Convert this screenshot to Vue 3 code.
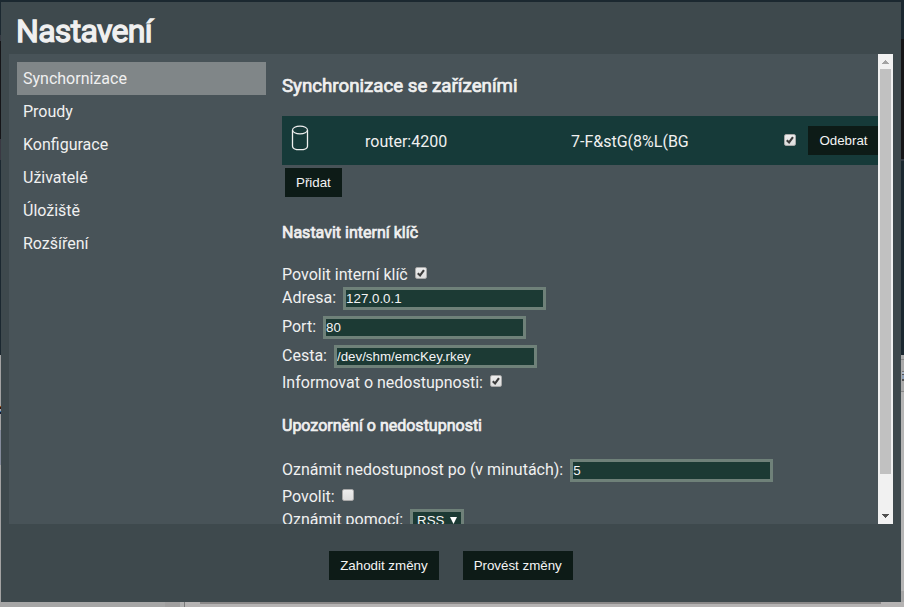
<script setup>
import { ref } from 'vue'

const sections = ['Synchornizace', 'Proudy', 'Konfigurace', 'Uživatelé', 'Úložiště', 'Rozšíření']
const active = ref('Synchornizace')
const deviceEnabled = ref(true)
const keyEnabled = ref(true)
const keyNotify = ref(true)
const alertEnabled = ref(false)
const address = ref('127.0.0.1')
const port = ref('80')
const path = ref('/dev/shm/emcKey.rkey')
const minutes = ref('5')
</script>

<template>
  <div class="backdrop">
    <div class="edge left"><i class="ink"></i></div>
    <div class="edge right"><i class="ink"></i></div>
    <div class="edge bottom"></div>
    <main class="dialog">
      <h1>Nastavení</h1>
      <div class="panel">
        <nav>
          <a v-for="s in sections" :key="s" :class="{ active: s === active }" @click="active = s">{{ s }}</a>
        </nav>
        <section class="content">
          <h2>Synchronizace se zařízeními</h2>
          <div class="device">
            <svg class="disk" width="18" height="26" viewBox="0 0 18 26" fill="none" stroke="#f0f0f0">
              <ellipse cx="9" cy="5" rx="7.5" ry="3.9" stroke-width="1.1" />
              <path d="M1.5 5v16.2c0 2.1 3.1 3.5 7.5 3.5s7.5-1.4 7.5-3.5V5" stroke-width="1.3" />
            </svg>
            <span class="host">router:4200</span>
            <span class="secret">7-F&amp;stG(8%L(BG</span>
            <label class="check"><input v-model="deviceEnabled" type="checkbox" /><svg v-if="deviceEnabled" viewBox="0 0 13 13"><path d="M3 6.8l2.5 2.4L9.7 3.4" /></svg></label>
            <button class="remove">Odebrat</button>
          </div>
          <button class="add">Přidat</button>

          <h3>Nastavit interní klíč</h3>
          <div class="row"><span>Povolit interní klíč</span><label class="check"><input v-model="keyEnabled" type="checkbox" /><svg v-if="keyEnabled" viewBox="0 0 13 13"><path d="M3 6.8l2.5 2.4L9.7 3.4" /></svg></label></div>
          <div class="row field"><span>Adresa:</span><input v-model="address" class="text" /></div>
          <div class="row field"><span>Port:</span><input v-model="port" class="text" /></div>
          <div class="row field last"><span>Cesta:</span><input v-model="path" class="text" /></div>
          <div class="row"><span>Informovat o nedostupnosti:</span><label class="check"><input v-model="keyNotify" type="checkbox" /><svg v-if="keyNotify" viewBox="0 0 13 13"><path d="M3 6.8l2.5 2.4L9.7 3.4" /></svg></label></div>

          <h3 class="second">Upozornění o nedostupnosti</h3>
          <div class="row field last"><span>Oznámit nedostupnost po (v minutách):</span><input v-model="minutes" class="text" /></div>
          <div class="row"><span>Povolit:</span><label class="check"><input v-model="alertEnabled" type="checkbox" /></label></div>
          <div class="row field"><span>Oznámit pomocí:</span><div class="select">RSS<svg width="7" height="7" viewBox="0 0 7 7"><path d="M0 0h7L3.5 7z" fill="#fff" /></svg></div></div>
        </section>
        <div class="scrollbar">
          <svg width="15" height="15" viewBox="0 0 15 15" shape-rendering="crispEdges"><path d="M4 10L7.5 6 11 10z" fill="#a3a3a3" /></svg>
          <div class="thumb"></div>
          <svg width="15" height="15" viewBox="0 0 15 15" shape-rendering="crispEdges"><path d="M4 5h7L7.5 9z" fill="#505050" /></svg>
        </div>
      </div>
      <footer>
        <button>Zahodit změny</button>
        <button>Provést změny</button>
      </footer>
    </main>
  </div>
</template>

<style>
html, body { margin: 0; overflow: hidden; }
</style>

<style scoped>
* { box-sizing: border-box; }
.backdrop {
  position: relative;
  width: 904px;
  height: 607px;
  padding: 2px 3px 5px 1px;
  overflow: hidden;
  background: #1b2830;
  font: 16px/19px Roboto, "Liberation Sans", sans-serif;
  color: #f0f0f0;
}
.edge { position: absolute; }
.left {
  left: 0; top: 0; width: 1px; height: 607px;
  background: linear-gradient(#1b2830 35px, #353942 35px 41px, #151518 41px 139px, #393842 139px 160px, #1b2830 160px 355px, #a3a3a3 355px 430px, #848b9b 430px 465px, #a3a3a3 465px);
}
.left .ink { position: absolute; left: 0; top: 406px; width: 1px; height: 8px; background: linear-gradient(#985415 1px, #35120c 1px 3px, #aaa 3px 5px, #3472ad 5px 6px, #151b33 6px); }
.right {
  right: 0; top: 0; width: 3px; height: 607px;
  background: linear-gradient(#1b2830 39px, #151518 39px 159px, #343b45 159px 161px, #1b2830 161px 355px, #aaa 355px 359px, #888 359px 360px, #aaa 360px 391px, #888 391px 392px, #b5b5b5 392px 591px, #a6a6a6 591px);
}
.right .ink { position: absolute; right: 0; top: 371px; width: 2px; height: 10px; background: linear-gradient(#777 1px, #abb7c8 1px 3px, #555 3px 4px, #91a3bb 4px 8px, #555 8px); }
.bottom {
  left: 0; bottom: 0; width: 904px; height: 5px;
  background:
    linear-gradient(#8a8888, #8a8888) 200px 0 / 681px 2px no-repeat,
    linear-gradient(90deg, #a6a6a6 165px, #a09f9f 165px 180px, #b0b0b0 180px 184px, #797979 184px 185px, #b5b3b3 185px);
}
.dialog { position: relative; width: 900px; height: 600px; padding: 0 8px; background: #3e494d; }
h1, h2, h3 { margin: 0; font-weight: 400; -webkit-text-stroke: .7px currentColor; }
h1 { height: 52px; padding: 10px 0 0 7px; font-size: 32px; line-height: 38px; letter-spacing: -.7px; -webkit-text-stroke-width: 1.3px; }
.panel { display: flex; height: 470px; padding-left: 8px; background: #485358; overflow: hidden; }
nav { width: 249px; margin-right: 16px; padding-top: 8px; flex: none; }
nav a { display: block; height: 33px; padding: 7px 6px; }
nav .active { background: #808688; }
.content { flex: 1; min-width: 0; overflow: hidden; }
h2 { height: 62px; padding-top: 21px; font-size: 18.72px; line-height: 22px; }
.device { display: flex; align-items: center; height: 49px; background: #163a39; white-space: nowrap; }
.disk { margin: -5px 0 0 9px; flex: none; }
.host { width: 206px; margin-left: 56px; padding-top: 1px; flex: none; }
.secret { width: 213px; padding-top: 1px; flex: none; }
.device .check { margin: -2px 0 0; }
button {
  height: 29px; padding: 0 11px; border: 0; border-radius: 0;
  background: #0d1b17; color: #f4f4f4;
  font: 13.333px/15px "Liberation Sans", Arial, sans-serif;
  white-space: nowrap;
}
.remove { margin-left: 12px; width: 71px; flex: none; }
.add { display: block; margin: 3px 0 0 3px; }
h3 { margin-top: 26px; height: 42px; font-size: 16px; line-height: 19px; }
h3.second { margin-top: 21px; height: 43px; }
.row { display: flex; align-items: flex-start; height: 22px; white-space: nowrap; }
.field { height: 29px; }
.last { height: 28px; }
.field span { padding-top: 1px; }
.text {
  width: 203px; height: 23px; margin: 0 0 0 7px; padding: 0;
  border: 3px solid #6f8179; border-radius: 0; background: #1c3a34; color: #f4f4f4; outline: 0;
  font: 13.333px/17px "Liberation Sans", Arial, sans-serif;
}
.check { position: relative; display: block; width: 12px; height: 12px; margin: 2px 0 0 7.5px; flex: none; }
.check input {
  appearance: none; display: block; width: 12px; height: 12px; margin: 0;
  border: 1px solid #a9a9a9; border-radius: 2px;
  background: linear-gradient(#ededed, #dedede);
}
.check svg { position: absolute; left: 0; top: 0; width: 12px; height: 12px; fill: none; stroke: #3c3c3c; stroke-width: 2.3; }
.select {
  display: flex; align-items: flex-start; gap: 5px; width: 54px; height: 23px; margin-left: 7px; padding: 1px 4px;
  border: 3px solid #6f8179; background: #1c3a34; color: #f4f4f4;
  font: 13.333px/15px "Liberation Sans", Arial, sans-serif;
}
.select svg { margin-top: 4px; flex: none; }
.scrollbar { width: 15px; flex: none; background: #f1f1f1; display: flex; flex-direction: column; }
.thumb { width: 11px; height: 405px; margin: 0 2px 35px; background: #c1c1c1; flex: none; }
footer { display: flex; justify-content: center; gap: 24px; padding-top: 27px; }
</style>
